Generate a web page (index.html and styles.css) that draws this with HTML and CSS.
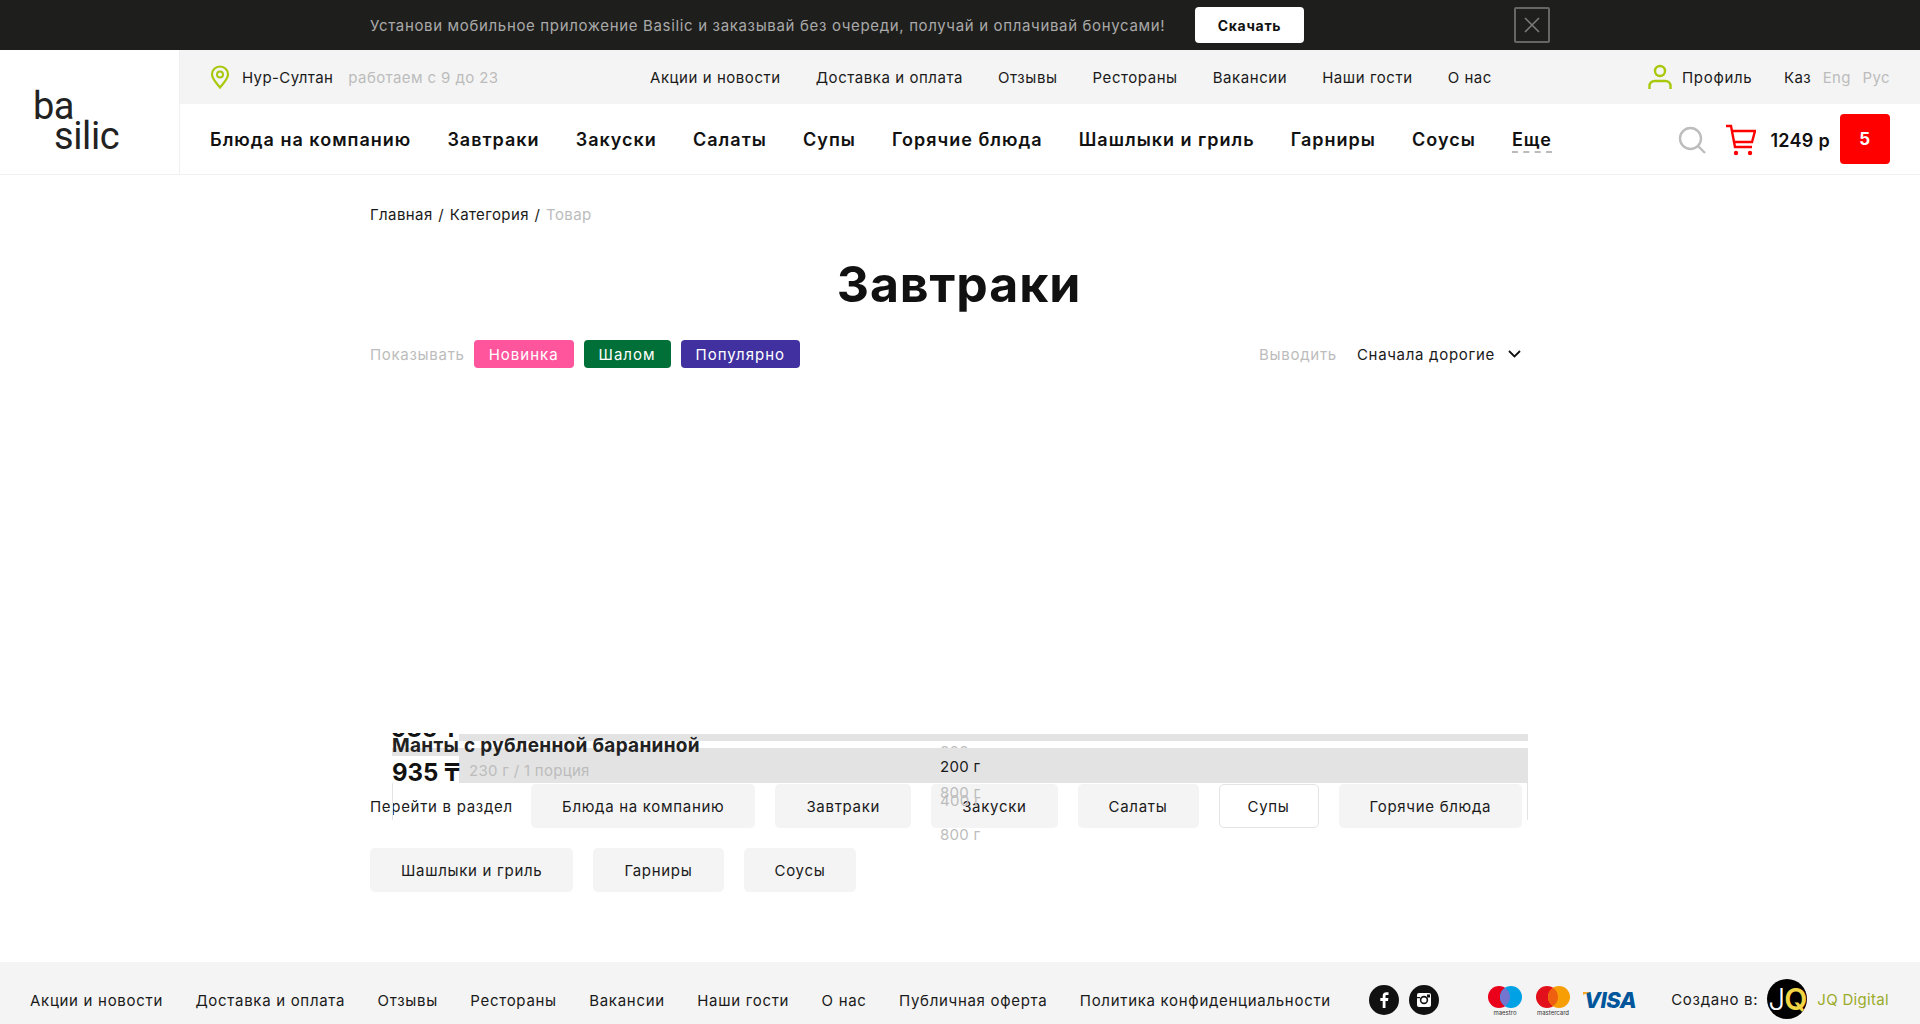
FILE: index.html
```html
<!doctype html>
<html lang="ru">
  <head>
    <meta charset="UTF-8" />
    <meta name="viewport" content="width=device-width, initial-scale=1" />
    <title>Завтраки - Basilic</title>
    <link rel="stylesheet" href="styles.css">
  </head>
  <body>
    <div class="app-banner">
      <span class="app-banner-text">Установи мобильное приложение Basilic и заказывай без очереди, получай и оплачивай бонусами!</span>
      <a class="app-banner-btn">Скачать</a>
      <button class="app-banner-close" aria-label="Закрыть">
        <svg width="16" height="16" viewBox="0 0 16 16"><path d="M1 1l14 14M15 1L1 15" stroke="#7a7a7a" stroke-width="1.6" fill="none"/></svg>
      </button>
    </div>

    <header class="header">
      <a class="logo"><span class="logo-ba">ba</span><span class="logo-silic">silic</span></a>
      <div class="header-body">
        <div class="topbar">
          <div class="city">
            <svg width="20" height="24" viewBox="0 0 20 24"><path d="M10 22.5C5.5 17 2 13.5 2 9.5a8 8 0 0 1 16 0c0 4-3.500 7.500-8 13z" fill="none" stroke="#a8c80c" stroke-width="2.200"/><circle cx="10" cy="9.500" r="3" fill="none" stroke="#a8c80c" stroke-width="2"/></svg>
            <span>Нур-Султан</span>
            <span class="muted city-hours">работаем с 9 до 23</span>
          </div>
          <nav class="topnav">
            <a>Акции и новости</a>
            <a>Доставка и оплата</a>
            <a>Отзывы</a>
            <a>Рестораны</a>
            <a>Вакансии</a>
            <a>Наши гости</a>
            <a>О нас</a>
          </nav>
          <a class="profile">
            <svg width="24" height="26" viewBox="0 0 24 26"><circle cx="12" cy="7" r="5" fill="none" stroke="#a8c80c" stroke-width="2.400"/><path d="M1.500 25v-3a5 5 0 0 1 5-5h11a5 5 0 0 1 5 5v3" fill="none" stroke="#a8c80c" stroke-width="2.400"/></svg>
            <span>Профиль</span>
          </a>
          <div class="langs">
            <a>Каз</a>
            <a class="muted">Eng</a>
            <a class="muted">Рус</a>
          </div>
        </div>
        <div class="mainbar">
          <nav class="mainnav">
            <a>Блюда на компанию</a>
            <a>Завтраки</a>
            <a>Закуски</a>
            <a>Салаты</a>
            <a>Супы</a>
            <a>Горячие блюда</a>
            <a>Шашлыки и гриль</a>
            <a>Гарниры</a>
            <a>Соусы</a>
            <a class="mainnav-more">Еще</a>
          </nav>
          <div class="mainbar-tools">
            <svg width="28" height="28" viewBox="0 0 28 28"><circle cx="12.500" cy="12.500" r="10.500" fill="none" stroke="#bdbdbd" stroke-width="2.400"/><path d="M20 20l7 7" stroke="#bdbdbd" stroke-width="2.400"/></svg>
            <svg class="cart-icon" width="30" height="32" viewBox="0 0 30 32"><path d="M0 2h5l4 21h17M6 7h23l-3 11H8" fill="none" stroke="#f00" stroke-width="2.400"/><circle cx="10" cy="29" r="2.200" fill="#f00"/><circle cx="24" cy="29" r="2.200" fill="#f00"/></svg>
            <span class="cart-sum">1249 р</span>
            <span class="cart-count">5</span>
          </div>
        </div>
      </div>
    </header>

    <main class="page">
      <div class="crumbs">
        <a>Главная</a> / <a>Категория</a> / <span class="muted">Товар</span>
      </div>
      <h1>Завтраки</h1>
      <div class="filters">
        <span class="muted">Показывать</span>
        <a class="tag tag-new">Новинка</a>
        <a class="tag tag-shalom">Шалом</a>
        <a class="tag tag-popular">Популярно</a>
        <div class="sort">
          <span class="muted">Выводить</span>
          <span class="sort-value">Сначала дорогие</span>
          <svg width="13" height="8" viewBox="0 0 13 8"><path d="M1 1l5.500 5.500L12 1" fill="none" stroke="#111" stroke-width="1.800"/></svg>
        </div>
      </div>

      <div class="catalog">
        <!-- cards collapsed under the section links, only their leftovers show -->
        <div class="stray-line stray-line-left"></div>
        <div class="stray-line stray-line-right"></div>
        <div class="stray-clip"><b>935 ₸</b></div>
        <div class="stray-strip"></div>
        <div class="stray-weight muted stray-w1">800 г</div>
        <div class="stray-bar"></div>
        <div class="stray-title">Манты с рубленной бараниной</div>
        <div class="stray-price"><b>935 ₸</b></div>
        <div class="stray-portion muted">230 г / 1 порция</div>
        <div class="stray-weight stray-w2">200 г</div>
        <div class="stray-weight muted stray-w3">800 г</div>
        <div class="stray-weight muted stray-w4">400 г</div>
        <div class="stray-weight muted stray-w5">800 г</div>
      </div>

      <div class="sections">
        <span class="sections-label">Перейти в раздел</span>
        <a class="section-link">Блюда на компанию</a>
        <a class="section-link">Завтраки</a>
        <a class="section-link">Закуски</a>
        <a class="section-link">Салаты</a>
        <a class="section-link section-link-active">Супы</a>
        <a class="section-link">Горячие блюда</a>
        <a class="section-link">Шашлыки и гриль</a>
        <a class="section-link">Гарниры</a>
        <a class="section-link">Соусы</a>
      </div>
    </main>

    <footer class="footer">
      <nav class="footer-nav">
        <a>Акции и новости</a>
        <a>Доставка и оплата</a>
        <a>Отзывы</a>
        <a>Рестораны</a>
        <a>Вакансии</a>
        <a>Наши гости</a>
        <a>О нас</a>
        <a>Публичная оферта</a>
        <a>Политика конфиденциальности</a>
      </nav>
      <div class="socials">
        <a class="social">
          <svg width="30" height="30" viewBox="0 0 30 30"><circle cx="15" cy="15" r="15" fill="#111"/><path d="M16.500 23v-7h2.500l.4-3h-2.900v-1.700c0-.9.3-1.400 1.500-1.400h1.500V7.300c-.4 0-1.200-.1-2.200-.1-2.200 0-3.600 1.300-3.600 3.700V13h-2.400v3h2.400v7z" fill="#fff"/></svg>
        </a>
        <a class="social">
          <svg width="30" height="30" viewBox="0 0 30 30"><circle cx="15" cy="15" r="15" fill="#111"/><rect x="8" y="8" width="14" height="14" rx="2" fill="#fff"/><circle cx="15" cy="15" r="4.200" fill="#111"/><circle cx="15" cy="15" r="2.600" fill="#fff"/><rect x="8" y="12" width="3" height="1.200" fill="#111"/><rect x="18" y="9.500" width="3" height="3" fill="#111"/></svg>
        </a>
      </div>
      <div class="payments">
        <div class="pay-card">
          <svg width="34" height="22" viewBox="0 0 34 22"><circle cx="11" cy="11" r="11" fill="#eb001b"/><circle cx="23" cy="11" r="11" fill="#00a2e5"/><path d="M17 1.800a11 11 0 0 1 0 18.400a11 11 0 0 1 0-18.400z" fill="#7375cf"/></svg>
          <span class="pay-name">maestro</span>
        </div>
        <div class="pay-card">
          <svg width="34" height="22" viewBox="0 0 34 22"><circle cx="11" cy="11" r="11" fill="#e2101a"/><circle cx="23" cy="11" r="11" fill="#f79e04"/><path d="M17 1.800a11 11 0 0 1 0 18.400a11 11 0 0 1 0-18.400z" fill="#ef5f10"/></svg>
          <span class="pay-name">mastercard</span>
        </div>
        <span class="visa">VISA</span>
      </div>
      <div class="credit">
        <span>Создано в:</span>
        <span class="jq-badge"><span class="jq-j">J</span><span class="jq-q">Q</span></span>
        <a class="jq-link">JQ Digital</a>
      </div>
    </footer>
  </body>
</html>
```

FILE: styles.css
```css
* {
  box-sizing: border-box;
}
body {
  margin: 0;
  font-family: Inter, "Noto Sans", sans-serif;
  font-size: 15px;
  letter-spacing: 0.7px;
  color: #1a1a1a;
  background: #fff;
  height: 1024px;
  overflow: hidden;
}
a {
  color: inherit;
  text-decoration: none;
}
svg {
  display: block;
  flex: none;
}
.muted {
  color: #bcbcbc;
}

.app-banner {
  height: 50px;
  background: #1e1e1c;
  display: flex;
  align-items: center;
  padding-left: 370px;
}
.app-banner-text {
  width: 825px;
  color: #a9a9a9;
  font-size: 15px;
  letter-spacing: 0.66px;
  white-space: nowrap;
}
.app-banner-btn {
  width: 109px;
  height: 36px;
  background: #fff;
  border-radius: 4px;
  color: #111;
  font-weight: 700;
  font-size: 14px;
  display: flex;
  align-items: center;
  justify-content: center;
}
.app-banner-close {
  width: 36px;
  height: 36px;
  margin-left: 210px;
  background: none;
  border: 2px solid #666;
  border-radius: 2px;
  padding: 0;
  display: flex;
  align-items: center;
  justify-content: center;
}

.header {
  display: flex;
  height: 125px;
  border-bottom: 1px solid #f0f0f0;
}
.logo {
  width: 180px;
  border-right: 1px solid #f0f0f0;
  display: flex;
  flex-direction: column;
  justify-content: center;
  font-family: Roboto, sans-serif;
  font-size: 38px;
  line-height: 30px;
  letter-spacing: -0.6px;
  color: #222;
  padding: 18px 0 0 33px;
}
.logo-silic {
  margin-left: 21px;
  letter-spacing: -0.4px;
}
.header-body {
  flex: 1;
  min-width: 0;
}
.topbar {
  height: 54px;
  background: #f4f4f4;
  display: flex;
  align-items: center;
  padding: 0 30px;
  letter-spacing: 0.4px;
}
.city {
  width: 440px;
  display: flex;
  align-items: center;
  gap: 12px;
  white-space: nowrap;
}
.city-hours {
  margin-left: 3px;
}
.topnav {
  width: 842px;
  display: flex;
  justify-content: space-between;
  letter-spacing: 0.55px;
  white-space: nowrap;
}
.profile {
  margin-left: 156px;
  width: 136px;
  display: flex;
  align-items: center;
  gap: 10px;
  letter-spacing: 0.7px;
}
.langs {
  flex: 1;
  display: flex;
  justify-content: space-between;
}

.mainbar {
  height: 70px;
  display: flex;
  align-items: center;
  padding: 2px 30px 0;
}
.mainnav {
  width: 1342px;
  display: flex;
  justify-content: space-between;
  font-size: 18px;
  letter-spacing: 1px;
  font-weight: 600;
  color: #111;
  white-space: nowrap;
}
.mainnav-more {
  border-bottom: 2px dashed #bbb;
  line-height: 22px;
  margin-bottom: -2px;
}
.mainbar-tools {
  flex: 1;
  display: flex;
  align-items: center;
  justify-content: flex-end;
  font-weight: 600;
}
.cart-icon {
  margin-left: 20px;
}
.cart-sum {
  margin-left: 14px;
  font-size: 18px;
  letter-spacing: 0.3px;
  color: #111;
  white-space: nowrap;
}
.cart-count {
  width: 50px;
  height: 50px;
  margin-left: 10px;
  margin-top: -2px;
  background: #f00;
  border-radius: 4px;
  color: #fff;
  font-size: 17px;
  font-weight: 700;
  display: flex;
  align-items: center;
  justify-content: center;
}

.page {
  width: 1158px;
  margin-left: 370px;
  padding-top: 30px;
}
.crumbs {
  height: 20px;
  line-height: 20px;
  letter-spacing: 0.4px;
  word-spacing: 1px;
}
h1 {
  margin: 29px 0 0;
  padding-left: 20px;
  height: 60px;
  line-height: 60px;
  font-size: 50px;
  font-weight: 700;
  color: #111;
  text-align: center;
  letter-spacing: 0.9px;
}
.filters {
  margin-top: 26px;
  height: 28px;
  display: flex;
  align-items: center;
}
.tag {
  height: 28px;
  margin-left: 10px;
  padding: 0 15px;
  border-radius: 4px;
  color: #fff;
  display: flex;
  align-items: center;
  letter-spacing: 1px;
}
.tag-new {
  margin-left: 9px;
  background: #ff559d;
}
.tag-shalom {
  background: #006f38;
}
.tag-popular {
  background: #4030a0;
}
.sort {
  margin-left: auto;
  margin-right: 7px;
  display: flex;
  align-items: center;
}
.sort-value {
  margin: 0 13px 0 20px;
}

.catalog {
  position: relative;
  height: 416px;
}
.stray-strip,
.stray-bar {
  position: absolute;
  right: 0;
  background: #e3e3e3;
}
.stray-strip {
  left: 89px;
  top: 366px;
  height: 7px;
}
.stray-bar {
  left: 22px;
  top: 380px;
  height: 35px;
}
.stray-line {
  position: absolute;
  top: 415px;
  width: 1px;
  height: 37px;
  background: #e3e3e3;
}
.stray-line-left {
  left: 22px;
}
.stray-line-right {
  right: 0;
}
.stray-clip {
  position: absolute;
  left: 21px;
  top: 365px;
  height: 6px;
  overflow: hidden;
  font-size: 24px;
  letter-spacing: 0;
  line-height: 0;
  color: #111;
}
.stray-clip b {
  display: block;
  margin-top: -4px;
}
.stray-title {
  position: absolute;
  left: 22px;
  top: 366px;
  font-size: 19px;
  letter-spacing: 0.3px;
  line-height: 24px;
  font-weight: 700;
  color: #222;
  white-space: nowrap;
}
.stray-price {
  position: absolute;
  left: 22px;
  top: 388px;
  width: 67px;
  height: 27px;
  background: #fff;
  font-size: 24px;
  letter-spacing: 0;
  line-height: 34px;
  color: #111;
  white-space: nowrap;
}
.stray-portion {
  position: absolute;
  left: 99px;
  top: 392px;
  line-height: 22px;
  letter-spacing: 0.3px;
  white-space: nowrap;
}
.stray-weight {
  position: absolute;
  left: 570px;
  line-height: 20px;
  letter-spacing: 0.3px;
  white-space: nowrap;
}
.stray-w1 {
  top: 374px;
}
.stray-w2 {
  top: 389px;
}
.stray-w3 {
  top: 415px;
}
.stray-w4 {
  top: 423px;
}
.stray-w5 {
  top: 457px;
}

.sections {
  display: flex;
  flex-wrap: wrap;
  align-items: center;
  gap: 20px;
  margin-right: -12px;
}
.sections-label {
  width: 141px;
  white-space: nowrap;
}
.section-link {
  height: 44px;
  padding: 0 31px;
  background: #f4f4f4;
  border-radius: 5px;
  display: flex;
  align-items: center;
  white-space: nowrap;
}
.section-link-active {
  padding: 0 28px;
  background: #fff;
  border: 1px solid #e4e4e4;
}

.footer {
  position: absolute;
  left: 0;
  right: 0;
  top: 962px;
  height: 62px;
  background: #f4f4f4;
  display: flex;
  align-items: center;
  padding: 14px 30px 0;
}
.footer-nav {
  width: 1301px;
  display: flex;
  justify-content: space-between;
  white-space: nowrap;
}
.socials {
  margin-left: 38px;
  display: flex;
  gap: 10px;
}
.social {
  display: block;
}
.payments {
  margin-left: 49px;
  display: flex;
  align-items: center;
  gap: 14px;
}
.pay-card {
  display: flex;
  flex-direction: column;
  align-items: center;
  gap: 1px;
  margin-top: 2px;
}
.pay-name {
  font-size: 6px;
  line-height: 7px;
  letter-spacing: 0;
  color: #333;
}
.visa {
  position: relative;
  font-style: italic;
  font-weight: 800;
  font-size: 22px;
  letter-spacing: -0.5px;
  color: #00559b;
}
.visa::before {
  content: "";
  position: absolute;
  left: -1px;
  top: 5px;
  border-top: 3px solid #f7a823;
  border-right: 7px solid transparent;
}
.credit {
  margin-left: 35px;
  margin-top: -2px;
  display: flex;
  align-items: center;
  white-space: nowrap;
}
.jq-badge {
  width: 40px;
  height: 40px;
  margin-left: 9px;
  border-radius: 50%;
  background: #000;
  overflow: hidden;
  display: flex;
  align-items: center;
  justify-content: center;
  font-size: 30px;
  line-height: 40px;
  letter-spacing: -1px;
}
.jq-j {
  color: #fff;
  font-weight: 300;
}
.jq-q {
  color: #f2d544;
  font-weight: 600;
}
.jq-link {
  margin-left: 10px;
  letter-spacing: 0.3px;
  color: #9aab2a;
}
```
